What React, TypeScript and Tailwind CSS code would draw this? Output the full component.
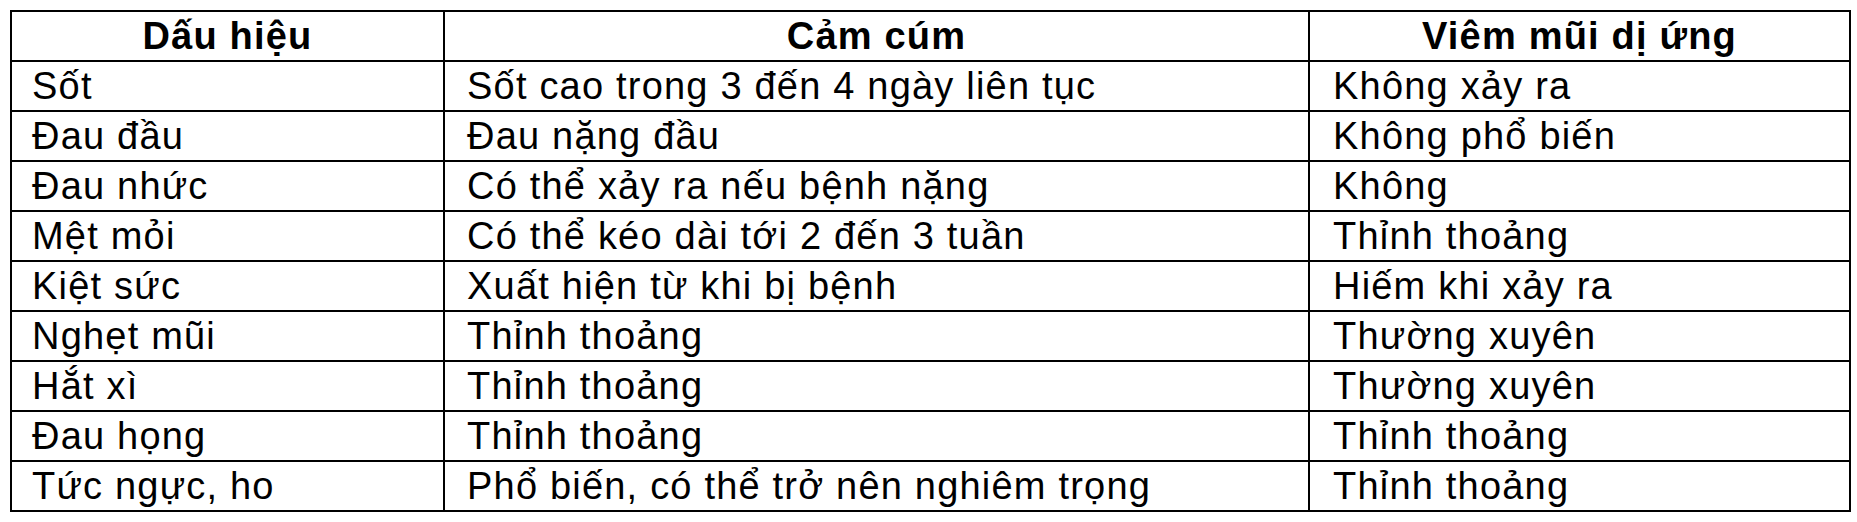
import React from "react";

const rows: [string, string, string][] = [
  ["Sốt", "Sốt cao trong 3 đến 4 ngày liên tục", "Không xảy ra"],
  ["Đau đầu", "Đau nặng đầu", "Không phổ biến"],
  ["Đau nhức", "Có thể xảy ra nếu bệnh nặng", "Không"],
  ["Mệt mỏi", "Có thể kéo dài tới 2 đến 3 tuần", "Thỉnh thoảng"],
  ["Kiệt sức", "Xuất hiện từ khi bị bệnh", "Hiếm khi xảy ra"],
  ["Nghẹt mũi", "Thỉnh thoảng", "Thường xuyên"],
  ["Hắt xì", "Thỉnh thoảng", "Thường xuyên"],
  ["Đau họng", "Thỉnh thoảng", "Thỉnh thoảng"],
  ["Tức ngực, ho", "Phổ biến, có thể trở nên nghiêm trọng", "Thỉnh thoảng"],
];

export default function App() {
  return (
    <div className="w-[1857px] h-[522px] bg-white pl-[10px] pt-[10px] text-black" style={{ fontFamily: '"Liberation Sans", Arial, sans-serif' }}>
      <table className="border-collapse border-2 border-black text-[38px] leading-[44px] tracking-[1.2px] w-[1839px] table-fixed">
        <colgroup>
          <col className="w-[433px]" />
          <col className="w-[865px]" />
          <col className="w-[541px]" />
        </colgroup>
        <thead>
          <tr className="h-[50px]">
            <th className="border-2 border-black font-bold text-center align-middle p-0">Dấu hiệu</th>
            <th className="border-2 border-black font-bold text-center align-middle p-0">Cảm cúm</th>
            <th className="border-2 border-black font-bold text-center align-middle p-0">Viêm mũi dị ứng</th>
          </tr>
        </thead>
        <tbody>
          {rows.map((r, i) => (
            <tr key={i} className="h-[50px]">
              <td className="border-2 border-black pl-[20px] pr-2 py-0 align-middle whitespace-nowrap">{r[0]}</td>
              <td className="border-2 border-black pl-[22px] pr-2 py-0 align-middle whitespace-nowrap">{r[1]}</td>
              <td className="border-2 border-black pl-[23px] pr-2 py-0 align-middle whitespace-nowrap">{r[2]}</td>
            </tr>
          ))}
        </tbody>
      </table>
    </div>
  );
}
